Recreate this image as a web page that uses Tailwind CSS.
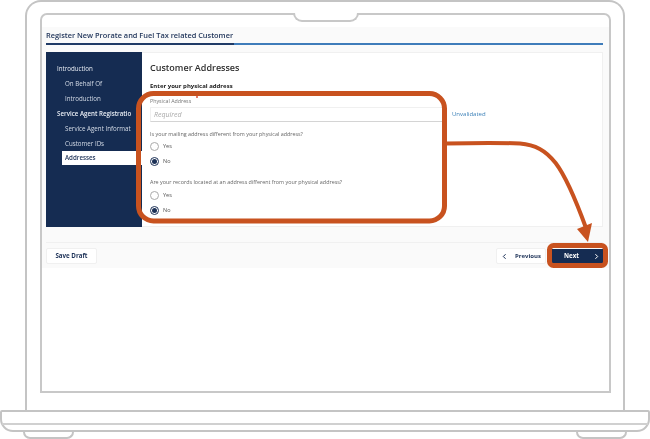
<!DOCTYPE html>
<html lang="en">
<head>
    <meta charset="UTF-8">
    <meta name="viewport" content="width=device-width, initial-scale=1.0">
    <title>Customer Addresses</title>
    <script src="https://cdn.jsdelivr.net/npm/@tailwindcss/browser@4"></script>
</head>
<body class="bg-white">
<div class="relative w-[650px] h-[439px] overflow-hidden bg-white font-['Open_Sans',sans-serif] blur-[0.45px]">

    <!-- Laptop lid -->
    <div class="mx-[25px] h-[410px] border-2 border-b-0 border-[#c4c4c4] rounded-t-[16px] pt-[11px] pl-[13px] pr-[12px]">
        <!-- Screen -->
        <div class="relative h-[380px] border-2 border-[#c8c8c8] rounded-t-[7px]">
            <!-- Camera notch -->
            <div class="absolute left-[251px] top-[-2px] w-[66px] h-[9px] bg-white border-2 border-t-0 border-[#c8c8c8] rounded-b-[9px]"></div>

            <div class="mt-[12px] h-[241px] bg-[#fafafa] px-[4px]">
                <!-- Title -->
                <div class="h-[16px] pt-[2px]">
                    <span class="block text-[7.4px] leading-[12px] font-semibold text-[#1c3157] whitespace-nowrap">Register New Prorate and Fuel Tax related Customer</span>
                </div>
                <div class="flex h-[2px] w-[557px]">
                    <div class="w-[188px] bg-[#1f3a66]"></div>
                    <div class="flex-1 bg-[#3f7cba]"></div>
                </div>

                <!-- Card -->
                <div class="flex mt-[7px] h-[175px] w-[557px] bg-white">
                    <!-- Sidebar -->
                    <div class="w-[96px] shrink-0 bg-[#152c52] pt-[9px] pl-[11px] text-[6.2px] text-[#d5dce7]">
                        <div class="h-[15px] leading-[15px] font-medium text-[#e8edf4]">Introduction</div>
                        <div class="h-[15px] leading-[15px] pl-[8px]">On Behalf Of</div>
                        <div class="h-[15px] leading-[15px] pl-[8px]">Introduction</div>
                        <div class="h-[15px] leading-[15px] w-[74px] font-semibold text-[#e8edf4] whitespace-nowrap overflow-hidden">Service Agent Registration</div>
                        <div class="h-[15px] leading-[15px] w-[74px] pl-[8px] whitespace-nowrap overflow-hidden">Service Agent Information</div>
                        <div class="h-[15px] leading-[15px] pl-[8px]">Customer IDs</div>
                        <div class="ml-[5px] mr-[-1px] h-[14px] leading-[14px] pl-[3px] bg-white text-[#1c3157] font-semibold">Addresses</div>
                    </div>

                    <!-- Form -->
                    <div class="flex-1 border border-l-0 border-[#f0f0f0] pl-[8px] pt-[8px] text-[#555]">
                        <h1 class="text-[9px] leading-[13px] font-semibold text-[#2f2f2f]">Customer Addresses</h1>
                        <div class="mt-[8px] text-[6px] leading-[9px] font-bold text-[#222]">Enter your physical address</div>

                        <div class="mt-[6px] text-[5.3px] leading-[8px] text-[#777]">Physical Address</div>
                        <div class="flex items-center mt-[2px]">
                            <div class="w-[293px] shrink-0 h-[15px] bg-white border border-[#f0f0f0] border-b-[#d4d4d4] pl-[3px] text-[7px] leading-[13px] italic text-[#aaa]">Required</div>
                            <span class="ml-[9px] text-[6px] text-[#3c80b8] whitespace-nowrap">Unvalidated</span>
                        </div>

                        <div class="mt-[8px] text-[5.4px] leading-[8px] text-[#666]">Is your mailing address different from your physical address?</div>
                        <div class="mt-[1px] flex items-center h-[15px] gap-[4px] text-[5.5px] text-[#555]">
                            <span class="w-[9px] h-[9px] rounded-full border border-[#aaa] bg-white"></span>Yes
                        </div>
                        <div class="flex items-center h-[15px] gap-[4px] text-[5.5px] text-[#555]">
                            <span class="flex items-center justify-center w-[9px] h-[9px] rounded-full border border-[#1c3157] bg-white"><span class="w-[5px] h-[5px] rounded-full bg-[#1c3157]"></span></span>No
                        </div>

                        <div class="mt-[9px] text-[5.4px] leading-[8px] text-[#666]">Are your records located at an address different from your physical address?</div>
                        <div class="mt-[2px] flex items-center h-[15px] gap-[4px] text-[5.5px] text-[#555]">
                            <span class="w-[9px] h-[9px] rounded-full border border-[#aaa] bg-white"></span>Yes
                        </div>
                        <div class="flex items-center h-[15px] gap-[4px] text-[5.5px] text-[#555]">
                            <span class="flex items-center justify-center w-[9px] h-[9px] rounded-full border border-[#1c3157] bg-white"><span class="w-[5px] h-[5px] rounded-full bg-[#1c3157]"></span></span>No
                        </div>
                    </div>
                </div>

                <!-- Footer actions -->
                <div class="mt-[15px] w-[557px] border-t border-[#f0f0f0] pt-[5px] flex items-center justify-between">
                    <button class="w-[51px] h-[16px] bg-white border border-[#f0f0f0] rounded-[2px] text-[6.2px] font-bold text-[#1c3157]">Save Draft</button>
                    <div class="flex items-center gap-[6px]">
                        <button class="flex items-center w-[50px] h-[16px] pl-[5px] bg-white border border-[#f0f0f0] rounded-[2px] text-[6px] font-bold text-[#1c3157]">
                            <svg class="w-[5px] h-[7px] mr-[8px]" viewBox="0 0 5 7" fill="none" stroke="#1c3157" stroke-width="1"><path d="M3.6 1.2 1.3 3.5 3.6 5.8"/></svg>
                            Previous
                        </button>
                        <button class="flex items-center justify-between w-[51px] h-[14px] pl-[12px] pr-[4px] bg-[#152c52] text-[6.2px] font-bold text-white">
                            Next
                            <svg class="w-[5px] h-[7px]" viewBox="0 0 5 7" fill="none" stroke="#fff" stroke-width="1"><path d="M1.4 1.2 3.7 3.5 1.4 5.8"/></svg>
                        </button>
                    </div>
                </div>
            </div>
        </div>
    </div>

    <!-- Laptop base -->
    <div class="h-[22px] border-2 border-[#c4c4c4] rounded-b-[13px] rounded-tr-[2px] rounded-tl-[2px]">
        <div class="mt-[11px] border-t-2 border-[#d0d0d0]"></div>
    </div>
    <div class="flex justify-between px-[23px]">
        <div class="w-[51px] h-[7px] border-2 border-t-0 border-[#c4c4c4] rounded-b-[7px]"></div>
        <div class="w-[51px] h-[7px] border-2 border-t-0 border-[#c4c4c4] rounded-b-[7px]"></div>
    </div>

    <!-- Required marker -->
    <div class="absolute left-[196px] top-[96px] w-[2px] h-[2px] rounded-full bg-[#d9503a]"></div>

    <!-- Callout annotation -->
    <svg class="absolute inset-0" width="650" height="439" viewBox="0 0 650 439" fill="none">
        <rect x="138.5" y="93.5" width="306" height="127.5" rx="15" stroke="#c8521f" stroke-width="5"/>
        <path d="M446 143.5 C470 143 495 142.5 520 143.5 C550 146 563 165 586 228" stroke="#c8521f" stroke-width="4"/>
        <path d="M577 229 L592 223 L588 242 Z" fill="#c8521f"/>
        <rect x="549.5" y="245.5" width="56" height="20" rx="4" stroke="#c8521f" stroke-width="5"/>
    </svg>
</div>
</body>
</html>
